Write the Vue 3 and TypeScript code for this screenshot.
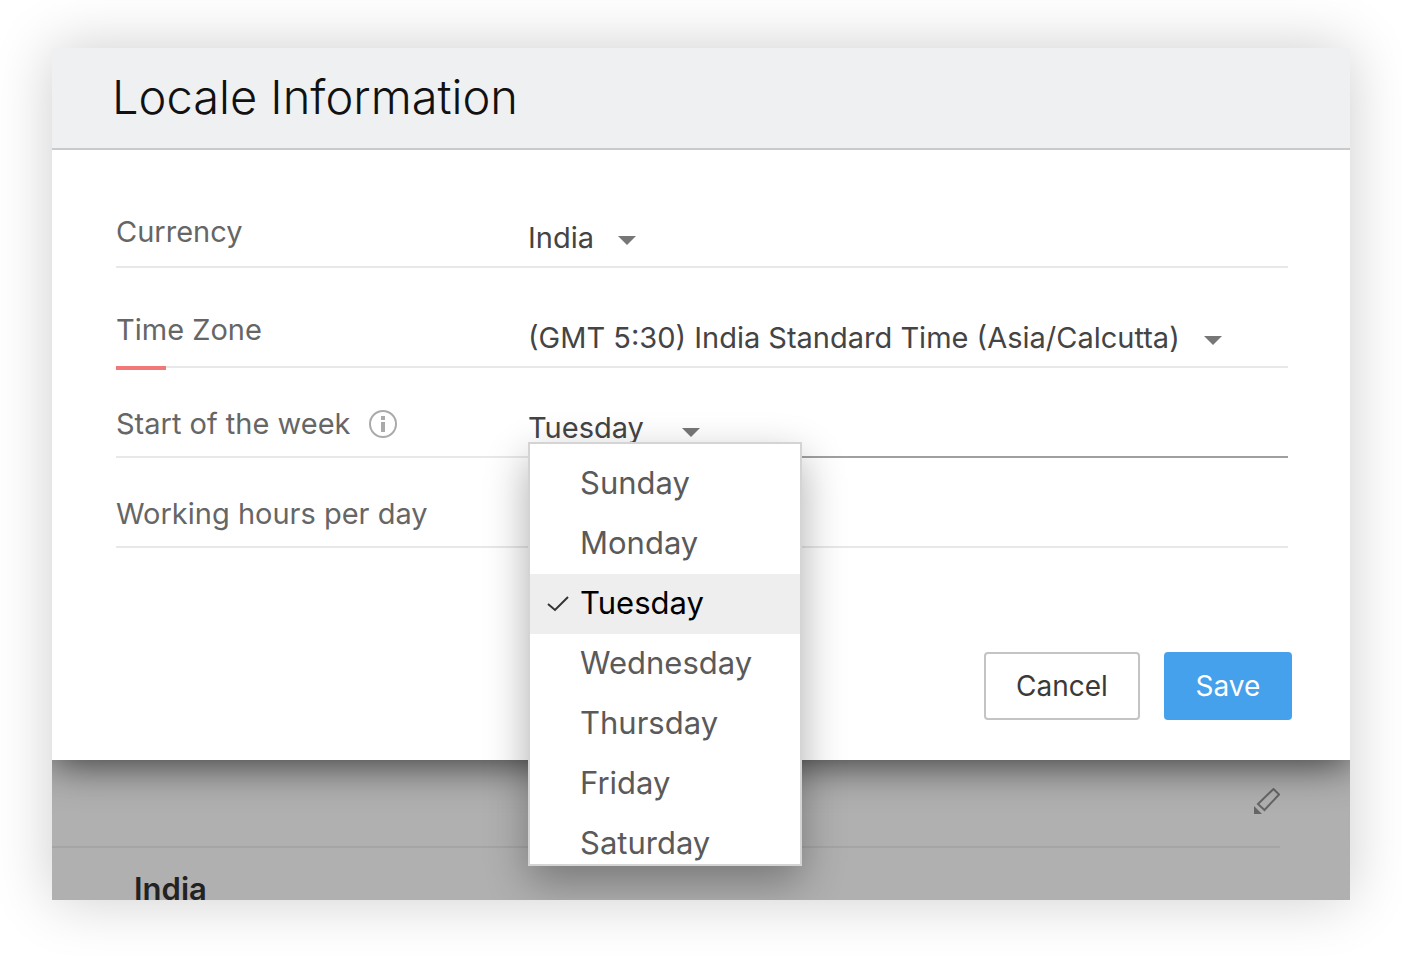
<script setup lang="ts">
import { ref } from 'vue'

const days: string[] = ['Sunday', 'Monday', 'Tuesday', 'Wednesday', 'Thursday', 'Friday', 'Saturday']

const currency = ref('India')
const timeZone = ref('(GMT 5:30) India Standard Time (Asia/Calcutta)')
const weekStart = ref('Tuesday')
const hours = ref('')
</script>

<template>
  <div class="stage">
    <main class="window">
      <form class="dialog" @submit.prevent>
        <header class="dialog-head">
          <h1>Locale Information</h1>
        </header>

        <div class="fields">
          <div class="row row-first">
            <label class="name" for="currency">Currency</label>
            <div class="value">
              <select id="currency" v-model="currency">
                <option>India</option>
              </select>
              <svg class="caret" viewBox="0 0 18 9" aria-hidden="true"><path d="M0 0h18L9 9z" /></svg>
            </div>
          </div>

          <div class="row row-zone">
            <label class="name" for="zone">Time Zone</label>
            <div class="value">
              <select id="zone" v-model="timeZone">
                <option>(GMT 5:30) India Standard Time (Asia/Calcutta)</option>
              </select>
              <svg class="caret" viewBox="0 0 18 9" aria-hidden="true"><path d="M0 0h18L9 9z" /></svg>
            </div>
          </div>

          <div class="row">
            <div class="name">
              <label for="week">Start of the week</label>
              <svg class="info" viewBox="0 0 28 28" aria-hidden="true">
                <circle cx="14" cy="14" r="13" />
                <path d="M12 6h4v4h-4zM12 12h4v10h-4z" />
              </svg>
            </div>
            <div class="value value-active">
              <select id="week" v-model="weekStart" class="week">
                <option v-for="day in days" :key="day">{{ day }}</option>
              </select>
              <svg class="caret" viewBox="0 0 18 9" aria-hidden="true"><path d="M0 0h18L9 9z" /></svg>
              <ul class="menu" role="listbox" aria-label="Start of the week">
                <li
                  v-for="day in days"
                  :key="day"
                  role="option"
                  :aria-selected="day === weekStart"
                  :class="{ selected: day === weekStart }"
                  @click="weekStart = day"
                >
                  <span class="tick">
                    <svg v-if="day === weekStart" viewBox="0 0 22 16" aria-hidden="true"><path d="M1 8l7 6L21 1" /></svg>
                  </span>
                  <span>{{ day }}</span>
                </li>
              </ul>
            </div>
          </div>

          <div class="row">
            <label class="name" for="hours">Working hours per day</label>
            <div class="value">
              <input id="hours" v-model="hours" type="text" />
            </div>
          </div>
        </div>

        <footer class="actions">
          <button type="button" class="cancel">Cancel</button>
          <button type="submit" class="save">Save</button>
        </footer>
      </form>

      <section class="behind">
        <div class="behind-bar">
          <button type="button" class="edit" aria-label="Edit">
            <svg viewBox="0 0 26 26" aria-hidden="true">
              <path class="body" d="M4 16L19.500 1L25 6.500L10.500 22z" />
              <path class="tip" d="M0 18v8h8z" />
            </svg>
          </button>
        </div>
        <p>India</p>
      </section>
    </main>
  </div>
</template>

<style>
html,
body {
  background: #fff;
}
</style>

<style scoped>
.stage,
.stage * {
  box-sizing: border-box;
}

.stage {
  display: flex;
  min-height: 100vh;
  padding: 48px 52px 56px;
  font-family: Inter, "Liberation Sans", sans-serif;
  font-size: 29px;
  line-height: 36px;
  color: #444;
}

.window {
  display: flex;
  flex: 1;
  flex-direction: column;
  min-width: 0;
  overflow: hidden;
  background: #b0b0b0;
  box-shadow: 0 0 56px rgba(0, 0, 0, 0.2);
}

.dialog {
  position: relative;
  z-index: 1;
  background: #fff;
}

.dialog-head {
  padding: 19px 60px 21px;
  background: #eff0f2;
  border-bottom: 2px solid #c9cacc;
}

h1 {
  margin: 0;
  font-size: 47px;
  font-weight: 300;
  line-height: 60px;
  color: #111;
}

.fields {
  padding: 50px 62px 0 64px;
}

.row {
  position: relative;
  display: grid;
  grid-template-columns: 412px 1fr;
  height: 90px;
}

.row-first {
  height: 68px;
}

.row-zone {
  height: 100px;
}

.name,
.value {
  display: flex;
  align-items: flex-end;
  border-bottom: 2px solid #e8e8e8;
}

.name {
  gap: 19px;
  padding-bottom: 14px;
  color: #666;
}

.row-first .name {
  padding-bottom: 16px;
}

.row-zone .name {
  padding-bottom: 18px;
}

.row-zone::after {
  position: absolute;
  bottom: -2px;
  left: 0;
  width: 50px;
  height: 4px;
  background: #f07878;
  content: "";
}

.value {
  position: relative;
  gap: 24px;
  padding-bottom: 10px;
}

.value-active {
  border-color: #a0a0a0;
}

select,
input {
  height: 36px;
  padding: 0;
  font: inherit;
  line-height: 36px;
  color: #444;
  appearance: none;
  background: none;
  border: 0;
  outline: 0;
}

.week {
  width: 130px;
}

input {
  width: 240px;
}

.caret {
  width: 18px;
  height: 9px;
  margin-bottom: 11px;
  fill: #777;
  pointer-events: none;
}

.value-active .caret {
  margin-bottom: 9px;
}

.info {
  width: 28px;
  height: 28px;
  margin-bottom: 4px;
  fill: #aaa;
}

.info circle {
  fill: none;
  stroke: #aaa;
  stroke-width: 2;
}

.menu {
  position: absolute;
  top: 74px;
  left: 0;
  z-index: 2;
  width: 274px;
  height: 424px;
  padding: 10px 0 0;
  margin: 0;
  overflow-y: auto;
  font-size: 31px;
  color: #5a5a5a;
  list-style: none;
  scrollbar-width: none;
  background: #fff;
  border: 2px solid #d4d4d4;
  box-shadow: 0 16px 40px rgba(0, 0, 0, 0.32);
}

.menu li {
  display: flex;
  align-items: center;
  height: 60px;
  padding: 0 0 2px 16px;
  cursor: pointer;
}

.menu .selected {
  color: #000;
  background: #eee;
}

.tick {
  display: flex;
  width: 34px;
  padding-top: 2px;
}

.tick svg {
  width: 24px;
  height: 16px;
  fill: none;
  stroke: #333;
  stroke-width: 2;
}

.actions {
  display: flex;
  gap: 24px;
  justify-content: flex-end;
  padding: 104px 58px 40px;
}

.actions button {
  height: 68px;
  padding: 0;
  font: inherit;
  font-size: 28px;
  border: 2px solid #c4c4c4;
  border-radius: 4px;
}

.actions .cancel {
  width: 156px;
  color: #3a3a3a;
  background: #fff;
}

.actions .save {
  width: 128px;
  color: #fff;
  background: #45a1ec;
  border-color: #45a1ec;
}

.behind {
  position: relative;
  flex: 1 0 0;
  height: 140px;
  overflow: hidden;
}

.behind::before {
  position: absolute;
  top: -60px;
  right: 0;
  left: 0;
  height: 60px;
  content: "";
  box-shadow: 0 4px 40px rgba(0, 0, 0, 0.7);
}

.behind-bar {
  display: flex;
  align-items: center;
  justify-content: flex-end;
  height: 88px;
  margin-right: 70px;
  border-bottom: 2px solid #a5a5a5;
}

.edit {
  display: flex;
  padding: 0;
  margin-bottom: 4px;
  background: none;
  border: 0;
}

.edit svg {
  width: 26px;
  height: 26px;
}

.body {
  fill: none;
  stroke: #666;
  stroke-width: 2;
}

.tip {
  fill: #666;
}

.behind p {
  padding-left: 82px;
  margin: 23px 0 0;
  font-size: 31px;
  font-weight: 600;
  color: #222;
}
</style>
